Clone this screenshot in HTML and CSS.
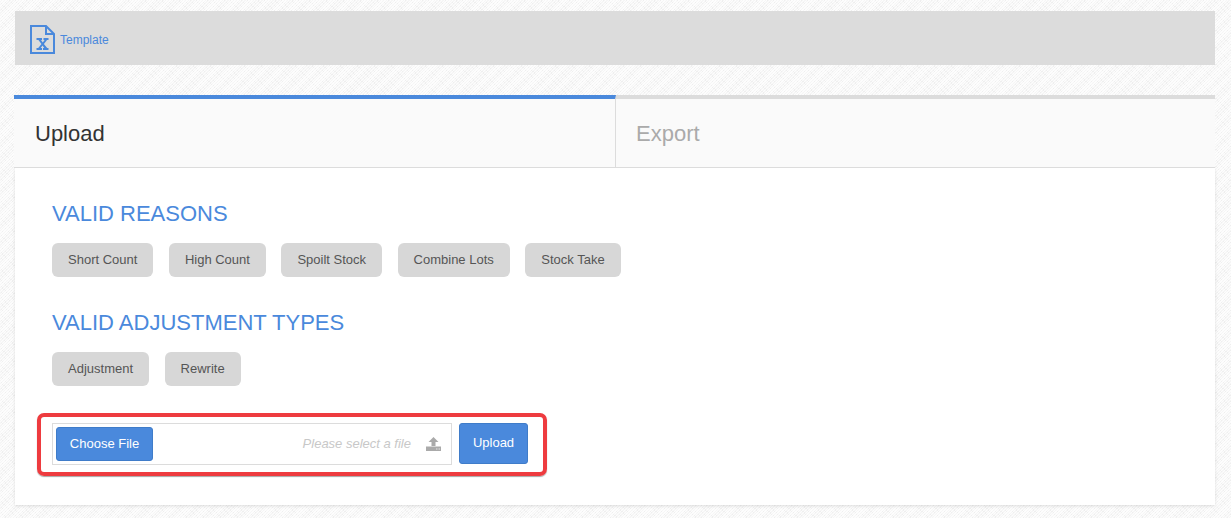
FILE: index.html
```html
<!DOCTYPE html>
<html lang="en">
<head>
<meta charset="utf-8">
<title>Upload</title>
<link rel="stylesheet" href="styles.css">
</head>
<body>
<div class="toolbar">
  <a class="template" href="#">
    <svg class="xls" width="25" height="29" viewBox="0 0 25 29">
      <path d="M1 1H16L24 9V28H1Z M16 1V9H24" fill="none" stroke="#4a89dc" stroke-width="2"/>
      <path d="M6.500 13H12V15H11L12.800 17.400L14.600 15H13.500V13H18.500V15H17L13.900 18.900L17.200 23H18.500V25H13V23H14.200L12.500 20.500L10.700 23H12V25H6.500V23H8.200L11.500 18.900L8.400 15H6.500Z" fill="#4a89dc"/>
    </svg>
    <span>Template</span>
  </a>
</div>
<main class="card">
  <div class="tabs">
    <div class="tab active">Upload</div>
    <div class="tab">Export</div>
  </div>
  <div class="panel">
    <h2>VALID REASONS</h2>
    <div class="tags">
      <span class="tag">Short Count</span>
      <span class="tag">High Count</span>
      <span class="tag">Spoilt Stock</span>
      <span class="tag">Combine Lots</span>
      <span class="tag">Stock Take</span>
    </div>
    <h2 class="second">VALID ADJUSTMENT TYPES</h2>
    <div class="tags">
      <span class="tag">Adjustment</span>
      <span class="tag">Rewrite</span>
    </div>
    <div class="highlight">
      <div class="file">
        <button class="btn choose" type="button">Choose File</button>
        <span class="hint">Please select a file</span>
        <svg class="up" width="15" height="14" viewBox="0 0 15 14">
          <path d="M7.500 0L12.500 5H9.500V9H5.500V5H2.500Z" fill="#aaa"/>
          <path d="M0 9.500H15V14H0Z" fill="#aaa"/>
          <path d="M10 11.500H11.500V12.500H10ZM12.500 11.500H14V12.500H12.500Z" fill="#e4e4e4"/>
        </svg>
      </div>
      <button class="btn send" type="button">Upload</button>
    </div>
  </div>
</main>
</body>
</html>
```
FILE: styles.css
```css
* { box-sizing: border-box; }
html, body { height: 100%; }
body {
  margin: 0;
  padding: 11px 16px 0 14px;
  overflow: hidden;
  font-family: "Liberation Sans", Arial, sans-serif;
  background-color: #f6f6f6;
  background-image:
    repeating-linear-gradient(135deg, rgba(255,255,255,.8) 0 1px, transparent 1px 2px),
    repeating-linear-gradient(45deg, rgba(228,228,228,.4) 0 1px, transparent 1px 4px);
}
.toolbar {
  display: flex;
  align-items: center;
  height: 54px;
  margin-left: 1px;
  padding: 2px 0 0 15px;
  background: #dcdcdc;
}
.template {
  display: flex;
  align-items: center;
  gap: 5px;
  color: #4a89dc;
  font-size: 12px;
  text-decoration: none;
}
.template span { position: relative; top: 1px; }
.xls { display: block; }
.card { margin-top: 30px; }
.tabs { display: flex; height: 73px; }
.tab {
  flex: 1;
  display: flex;
  align-items: center;
  padding: 1px 0 0 20px;
  border-top: 4px solid #dcdcdc;
  border-bottom: 1px solid #dcdcdc;
  background: #fafafa;
  color: #aaa;
  font-size: 22px;
}
.tab.active {
  flex: 0 0 602px;
  padding-left: 21px;
  border-top-color: #4a89dc;
  border-right: 1px solid #dcdcdc;
  color: #333;
}
.panel {
  height: 337px;
  margin-left: 1px;
  padding: 33px 37px 0;
  background: #fff;
  box-shadow: 0 1px 3px rgba(0,0,0,.12);
}
h2 {
  margin: 0 0 16px;
  color: #4a89dc;
  font-size: 22px;
  font-weight: 400;
  line-height: 26px;
}
h2.second { margin-top: 33px; }
.tags { display: flex; gap: 15.5px; }
.tag {
  display: flex;
  align-items: center;
  height: 34px;
  padding: 0 16px 2px;
  border-radius: 6px;
  background: #d7d7d7;
  color: #555;
  font-size: 13px;
}
.highlight {
  display: flex;
  align-items: flex-start;
  gap: 7px;
  width: 510px;
  height: 63px;
  margin: 27px 0 0 -15px;
  padding: 6px 0 0 11px;
  border: 4px solid #ee3b3f;
  border-radius: 7px;
  box-shadow: 0 1px 1px rgba(0,0,0,.35);
}
.file {
  display: flex;
  align-items: center;
  width: 400px;
  height: 42px;
  padding: 0 10px 0 3px;
  border: 1px solid #dcdcdc;
}
.btn {
  border: 1px solid #3f7cc9;
  border-radius: 3px;
  background: #4a89dc;
  color: #fff;
  font-family: inherit;
  font-size: 13px;
  font-weight: 400;
  padding: 0;
}
.choose { width: 97px; height: 34px; padding-bottom: 2px; }
.hint {
  flex: 1;
  padding: 0 15px 2px 0;
  text-align: right;
  color: #c8c8c8;
  font-size: 13px;
  font-style: italic;
}
.up { display: block; }
.send { width: 69px; height: 41px; padding-bottom: 3px; }
```
